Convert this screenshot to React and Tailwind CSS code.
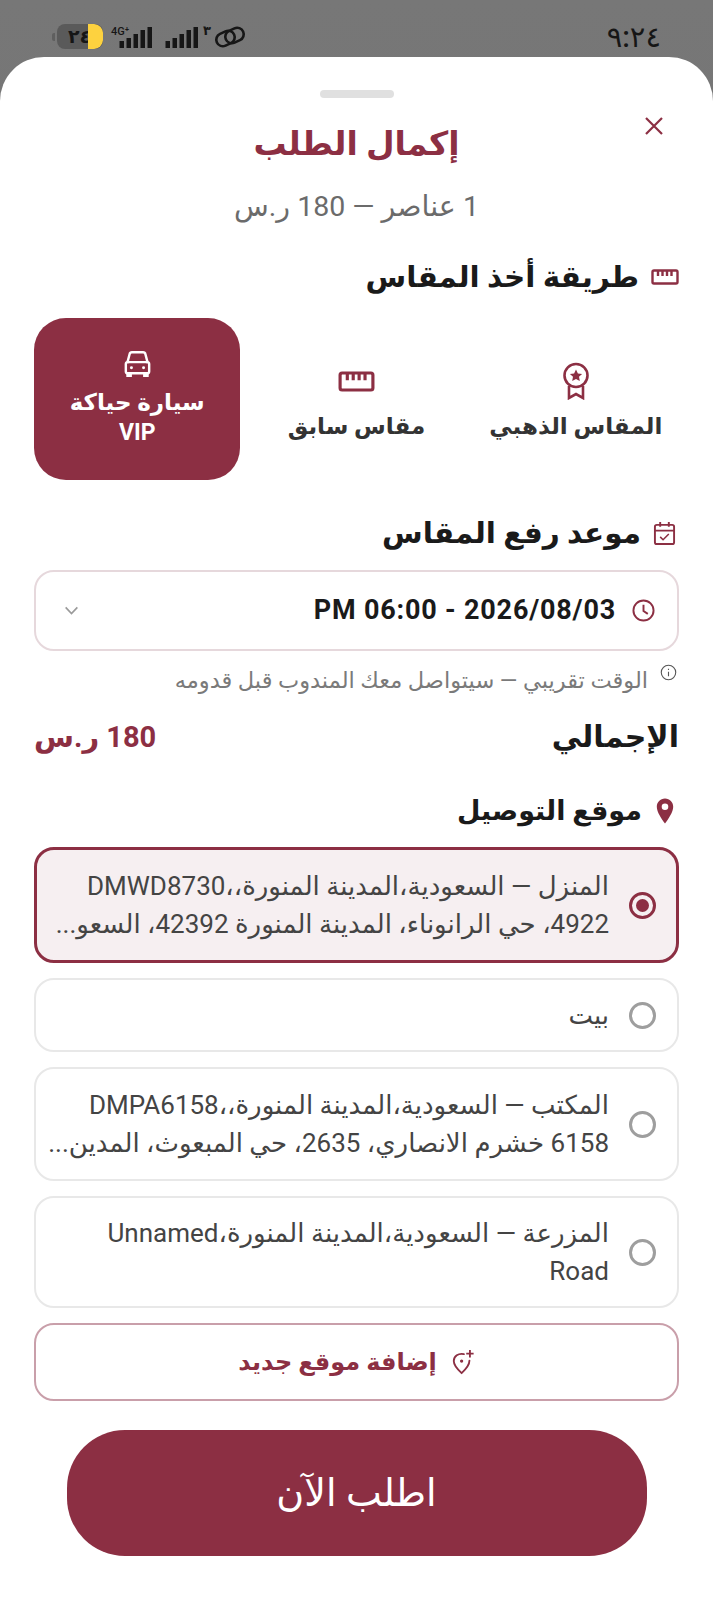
const addresses = [
  {
    lines: ["المنزل — السعودية،المدينة المنورة،،DMWD8730", "4922، حي الرانوناء، المدينة المنورة 42392، السعو..."],
    selected: true,
    box: "h-[116px]",
  },
  { lines: ["بيت"], box: "h-[74px]" },
  {
    lines: ["المكتب — السعودية،المدينة المنورة،،DMPA6158", "6158 خشرم الانصاري، 2635، حي المبعوث، المدين..."],
    box: "h-[114px]",
  },
  { lines: ["المزرعة — السعودية،المدينة المنورة،Unnamed", "Road"], box: "h-[112px]" },
];

function RulerIcon({ className }) {
  return (
    <svg viewBox="0 0 28 16" fill="none" stroke="currentColor" strokeWidth="2.4" className={className}>
      <rect x="1.5" y="1.5" width="25" height="13" rx="1.5" />
      <path d="M7 2v5M11.5 2v5M16 2v5M20.5 2v5" />
    </svg>
  );
}

function MedalIcon({ className }) {
  return (
    <svg viewBox="0 0 28 38" fill="none" stroke="currentColor" strokeWidth="2.6" className={className}>
      <circle cx="14" cy="13.5" r="11.5" />
      <path d="M7 24v12l7-4 7 4V24" />
      <path d="M14 7.5l1.9 3.9 4.2.5-3.1 2.9.8 4.2-3.8-2.1-3.8 2.1.8-4.2-3.1-2.9 4.2-.5z" fill="currentColor" stroke="none" />
    </svg>
  );
}

function CarIcon({ className }) {
  return (
    <svg viewBox="0 0 32 30" fill="none" stroke="currentColor" strokeWidth="2.6" className={className}>
      <path d="M5 14l2.5-9.5Q8 2.5 10 2.5h12q2 0 2.5 2L27 14" />
      <rect x="3.5" y="13" width="25" height="12" rx="2" />
      <circle cx="9.5" cy="19" r="1.6" fill="currentColor" stroke="none" />
      <circle cx="22.5" cy="19" r="1.6" fill="currentColor" stroke="none" />
      <path d="M4 25h6v4H4zM22 25h6v4h-6z" fill="currentColor" stroke="none" />
    </svg>
  );
}

function CalendarIcon({ className }) {
  return (
    <svg viewBox="0 0 24 26" fill="none" stroke="currentColor" strokeWidth="2" className={className}>
      <rect x="2" y="4" width="20" height="20" rx="2" />
      <path d="M2 10h20M7.5 1v5M16.5 1v5" />
      <path d="M7.5 16.5l3 3 6-6" strokeWidth="1.6" />
    </svg>
  );
}

function ClockIcon({ className }) {
  return (
    <svg viewBox="0 0 24 24" fill="none" stroke="currentColor" strokeWidth="2" className={className}>
      <circle cx="12" cy="12" r="10.5" />
      <path d="M12 6v6.5l4.5 3" />
    </svg>
  );
}

function ChevronIcon({ className }) {
  return (
    <svg viewBox="0 0 16 10" fill="none" stroke="currentColor" strokeWidth="1.8" className={className}>
      <path d="M1.5 1.5L8 8.5l6.5-7" />
    </svg>
  );
}

function InfoIcon({ className }) {
  return (
    <svg viewBox="0 0 20 20" fill="none" stroke="currentColor" strokeWidth="1.3" className={className}>
      <circle cx="10" cy="10" r="8.5" />
      <path d="M10 9v5.5M10 5.5v1.5" />
    </svg>
  );
}

function CloseIcon({ className }) {
  return (
    <svg viewBox="0 0 20 20" fill="none" stroke="currentColor" strokeWidth="2.2" className={className}>
      <path d="M2 2l16 16M18 2L2 18" />
    </svg>
  );
}

function PinIcon({ className }) {
  return (
    <svg viewBox="0 0 18 26" className={className}>
      <path
        fillRule="evenodd"
        fill="currentColor"
        d="M9 .5C4.2.5.8 4.2.8 8.800.8 14 5.500 21 9 25.500c3.500-4.500 8.200-11.500 8.200-16.700C17.200 4.200 13.800.5 9 .5zM9 5.500a3.300 3.300 0 1 1 0 6.600 3.300 3.300 0 0 1 0-6.600z"
      />
    </svg>
  );
}

function PinPlusIcon({ className }) {
  return (
    <svg viewBox="0 0 26 28" fill="none" stroke="currentColor" strokeWidth="2" className={className}>
      <path d="M14 5.500C8 4 3 8 3 13c0 4 4 9 8.500 13C16 22 20 17 20 12.500" strokeLinecap="round" />
      <circle cx="11.500" cy="13" r="1.800" fill="currentColor" stroke="none" />
      <path d="M20.500 1v8M16.500 5h8" />
    </svg>
  );
}

function SignalIcon({ className }) {
  return (
    <svg viewBox="0 0 34 21" className={className} fill="currentColor">
      <rect x="1" y="14" width="4.500" height="7" />
      <rect x="8" y="11" width="4.500" height="10" />
      <rect x="15" y="7" width="4.500" height="14" />
      <rect x="22" y="3" width="4.500" height="18" />
      <rect x="29" y="0" width="4.500" height="21" />
    </svg>
  );
}

function StatusIcons() {
  return (
    <div dir="ltr" className="flex items-center text-[#161616]">
      <span className="mr-[2px] h-[8px] w-[3px] rounded-l-[2px] bg-[#5f5f5f]" />
      <div className="relative flex h-[25px] w-[46px] items-center overflow-hidden rounded-[8px] bg-[#5a5a5a]">
        <span className="pl-[11px] text-[19px] font-bold leading-none">٢٤</span>
        <span className="absolute right-0 top-0 h-full w-[15px] rounded-r-[9px] bg-[#fdd23f]" />
      </div>
      <div className="relative ml-[15px] mt-[1px]">
        <span className="absolute -left-[7px] -top-[1px] text-[11px] font-medium leading-none">4G⁺</span>
        <SignalIcon className="h-[21px] w-[35px]" />
      </div>
      <SignalIcon className="ml-[11px] mt-[1px] h-[21px] w-[35px]" />
      <span className="-mt-[12px] ml-[4px] w-[11px] text-[13px] font-bold leading-none">٣</span>
      <svg viewBox="0 0 32 24" fill="none" stroke="currentColor" strokeWidth="2.600" className="h-[24px] w-[32px]">
        <rect x="2" y="7" width="19" height="13" rx="6.500" transform="rotate(-25 11.500 13.500)" />
        <rect x="11" y="4" width="19" height="13" rx="6.500" transform="rotate(-25 20.500 10.500)" />
      </svg>
    </div>
  );
}

function MethodOption({ label, extra, active, icon }) {
  return (
    <div
      className={`flex h-[162px] flex-1 flex-col items-center justify-center rounded-[32px] ${
        active ? "bg-[#8c2f43] text-white" : "text-[#333333]"
      }`}
    >
      <div className={active ? "text-white" : "mt-[6px] flex h-[38px] items-center text-[#8c2f43]"}>{icon}</div>
      <div className={`text-center text-[23px] font-bold leading-[30px] ${active ? "mt-[10px]" : "mt-[12px]"}`}>
        {label}
        {extra && <div>{extra}</div>}
      </div>
    </div>
  );
}

export default function App() {
  return (
    <div className="flex h-[1600px] w-[713px] flex-col overflow-hidden bg-gradient-to-b from-[#777777] to-[#6a6a6a] font-['Roboto','DejaVu_Sans',sans-serif]">
      <div className="flex h-[57px] items-start justify-between pl-[52px] pr-[52px] pt-[24px]">
        <StatusIcons />
        <span className="text-[29px] font-medium leading-[26px] text-[#161616]">٩:٢٤</span>
      </div>

      <div dir="rtl" className="flex flex-1 flex-col rounded-t-[44px] bg-white px-[34px]">
        <div className="mx-auto mt-[33px] h-[8px] w-[74px] rounded-full bg-[#e0e0e0]" />

        <div className="relative">
          <button className="absolute right-[15px] top-[18px] h-[20px] w-[20px] text-[#8c2f43]">
            <CloseIcon className="h-[20px] w-[20px]" />
          </button>
        </div>

        <h1 className="mt-[24px] text-center text-[33px] font-bold leading-[44px] text-[#8c2f43]">إكمال الطلب</h1>
        <p className="mt-[23px] text-center text-[28.500px] leading-[36px] text-[#6b6b6b]">1 عناصر — 180 ر.س</p>

        <div className="mt-[32px] flex items-center gap-[12px]">
          <RulerIcon className="h-[16px] w-[28px] text-[#8c2f43]" />
          <h2 className="text-[29.500px] font-bold leading-[40px] text-[#1a1a1a]">طريقة أخذ المقاس</h2>
        </div>

        <div className="mt-[21px] flex gap-[13px]">
          <MethodOption label="المقاس الذهبي" icon={<MedalIcon className="h-[38px] w-[28px]" />} />
          <MethodOption label="مقاس سابق" icon={<RulerIcon className="h-[21px] w-[37px]" />} />
          <MethodOption label="سيارة حياكة" extra="VIP" active icon={<CarIcon className="h-[28px] w-[31px]" />} />
        </div>

        <div className="mt-[33px] flex items-center gap-[12px] pr-[3px]">
          <CalendarIcon className="h-[25px] w-[23px] text-[#8c2f43]" />
          <h2 className="text-[29.500px] font-bold leading-[40px] text-[#1a1a1a]">موعد رفع المقاس</h2>
        </div>

        <div className="mt-[17px] flex h-[81px] items-center gap-[16px] rounded-[20px] border-2 border-[#e6d8dc] pl-[28px] pr-[22px]">
          <ClockIcon className="h-[23px] w-[23px] text-[#8c2f43]" />
          <span dir="ltr" className="flex-1 text-right text-[27px] font-bold tracking-[0.8px] text-[#1a1a1a]">
            PM 06:00 - 2026/08/03
          </span>
          <ChevronIcon className="h-[9px] w-[15px] text-[#9a9a9a]" />
        </div>

        <div className="mt-[13px] flex items-start gap-[12px] pr-[2px]">
          <InfoIcon className="h-[17px] w-[17px] text-[#555555]" />
          <span className="mt-[2px] text-[22.500px] leading-[28px] text-[#7a7a7a]">الوقت تقريبي — سيتواصل معك المندوب قبل قدومه</span>
        </div>

        <div className="mt-[22px] flex items-center justify-between">
          <h2 className="text-[30px] font-bold leading-[42px] text-[#1a1a1a]">الإجمالي</h2>
          <span className="text-[29px] font-bold leading-[36px] text-[#8c2f43]">180 ر.س</span>
        </div>

        <div className="mt-[33px] flex items-center gap-[14px] pr-[5px]">
          <PinIcon className="h-[26px] w-[18px] text-[#8c2f43]" />
          <h2 className="text-[27px] font-bold leading-[40px] text-[#1a1a1a]">موقع التوصيل</h2>
        </div>

        <div className="mt-[16px] flex flex-col gap-[15px]">
          {addresses.map((item) => (
            <div
              key={item.lines[0]}
              className={`flex items-center gap-[20px] rounded-[20px] pl-[24px] ${item.box} ${
                item.selected ? "border-[3px] border-[#8c2f43] bg-[#f6eff1] pr-[20px]" : "border-2 border-[#e8e8e8] pr-[21px]"
              }`}
            >
              <span
                className={`flex h-[27px] w-[27px] shrink-0 items-center justify-center rounded-full border-[3px] ${
                  item.selected ? "border-[#8c2f43]" : "border-[#9e9e9e]"
                }`}
              >
                {item.selected && <span className="h-[13px] w-[13px] rounded-full bg-[#8c2f43]" />}
              </span>
              <div className="whitespace-nowrap text-[26px] leading-[38px] text-[#444444]">
                {item.lines.map((line) => (
                  <div key={line}>{line}</div>
                ))}
              </div>
            </div>
          ))}
        </div>

        <button className="mt-[15px] flex h-[78px] items-center justify-center gap-[14px] rounded-[20px] border-2 border-[#c99faa] text-[24px] font-bold text-[#8c2f43]">
          <PinPlusIcon className="h-[26px] w-[24px]" />
          إضافة موقع جديد
        </button>

        <button className="mx-auto mt-[29px] h-[126px] w-[580px] rounded-[58px] bg-[#8c2f43] text-[38px] font-medium text-white">
          اطلب الآن
        </button>
      </div>
    </div>
  );
}
